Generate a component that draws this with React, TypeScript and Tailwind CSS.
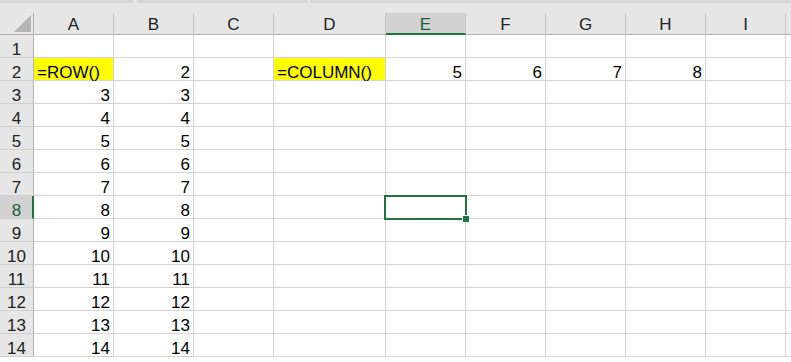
import React from 'react';

type Cell = { text?: string; align?: 'left' | 'right'; fill?: boolean };

const COLS = [
  { key: 'A', width: 'w-[80px]' },
  { key: 'B', width: 'w-[80px]' },
  { key: 'C', width: 'w-[80px]' },
  { key: 'D', width: 'w-[112px]' },
  { key: 'E', width: 'w-[80px]' },
  { key: 'F', width: 'w-[80px]' },
  { key: 'G', width: 'w-[80px]' },
  { key: 'H', width: 'w-[80px]' },
  { key: 'I', width: 'w-[80px]' },
];

const ACTIVE_COL = 'E';
const ACTIVE_ROW = 8;

// sheet contents, keyed by row then column letter
const buildRows = (): Record<string, Cell>[] => {
  const rows: Record<string, Cell>[] = [];
  rows.push({});
  rows.push({
    A: { text: '=ROW()', align: 'left', fill: true },
    B: { text: '2' },
    D: { text: '=COLUMN()', align: 'left', fill: true },
    E: { text: '5' },
    F: { text: '6' },
    G: { text: '7' },
    H: { text: '8' },
  });
  for (let n = 3; n <= 14; n++) {
    rows.push({ A: { text: String(n) }, B: { text: String(n) } });
  }
  return rows;
};

const ColumnHeader = () => (
  <div className="flex h-[32px] bg-[#e6e6e6]">
    {/* select-all corner */}
    <div className="w-[34px] shrink-0 pt-[10px]">
      <div className="h-[22px] border-r border-b border-[#b1b1b1] flex items-end justify-end pr-[2px] pb-[2px]">
        <svg width="17" height="17" viewBox="0 0 17 17">
          <polygon points="17,0 17,17 0,17" fill="#b4b4b4" />
        </svg>
      </div>
    </div>
    {COLS.map((c) => {
      const active = c.key === ACTIVE_COL;
      return (
        <div key={c.key} className={`${c.width} shrink-0 pt-[10px]`}>
          <div
            className={`h-[22px] border-r border-[#c4c4c4] flex items-end justify-center leading-[16px] ${
              active
                ? 'bg-[#d2d2d2] border-b-2 border-b-[#217346] text-[#1d5e3a]'
                : 'border-b border-b-[#b1b1b1] text-[#222]'
            }`}
          >
            <span className={active ? '' : 'pb-px'}>{c.key}</span>
          </div>
        </div>
      );
    })}
    <div className="flex-1 pt-[10px]">
      <div className="h-[22px] border-b border-[#b1b1b1]" />
    </div>
  </div>
);

const SheetRow = ({ index, cells }: { index: number; cells: Record<string, Cell> }) => {
  const activeRow = index === ACTIVE_ROW;
  return (
    <div className="flex h-[23px]">
      <div
        className={`w-[34px] shrink-0 flex items-end justify-center leading-[14px] border-b border-b-[#cfcfcf] ${
          activeRow
            ? 'bg-[#d2d2d2] border-r-2 border-r-[#217346] text-[#1d5e3a] pl-px'
            : 'bg-[#e6e6e6] border-r border-r-[#b1b1b1] text-[#222]'
        }`}
      >
        {index}
      </div>
      {COLS.map((c) => {
        const cell = cells[c.key];
        const selected = activeRow && c.key === ACTIVE_COL;
        return (
          <div
            key={c.key}
            className={`${c.width} shrink-0 relative flex items-end leading-[14px] border-r border-b border-[#d4d4d4] ${
              cell?.align === 'left' ? 'justify-start pl-[3px]' : 'justify-end pr-[3px]'
            } ${cell?.fill ? 'bg-[#ffff00]' : 'bg-white'}`}
          >
            {cell?.text}
            {selected && (
              <div className="absolute z-10 -left-[2px] -top-[1px] w-[83px] h-[25px] border-2 border-[#217346]">
                {/* fill handle */}
                <div className="absolute -right-[4px] -bottom-[4px] w-[7px] h-[7px] bg-[#217346] border-l border-t border-white" />
              </div>
            )}
          </div>
        );
      })}
      <div className="flex-1 bg-white border-b border-[#d4d4d4]" />
    </div>
  );
};

export default function App() {
  const rows = buildRows();
  return (
    <div
      className="w-[791px] h-[362px] overflow-hidden bg-white text-[17px] text-black"
      style={{ fontFamily: '"Liberation Sans", Arial, sans-serif' }}
    >
      {/* strip above the column letters */}
      <div className="flex h-[3px] bg-[#e6e6e6]">
        <div className="w-[133px] bg-[#d6d6d6]" />
        <div className="w-[4px]" />
        <div className="w-[170px] bg-[#d6d6d6]" />
        <div className="w-[3px]" />
        <div className="flex-1 bg-[#d6d6d6]" />
      </div>
      <ColumnHeader />
      {rows.map((cells, i) => (
        <SheetRow key={i} index={i + 1} cells={cells} />
      ))}
    </div>
  );
}
